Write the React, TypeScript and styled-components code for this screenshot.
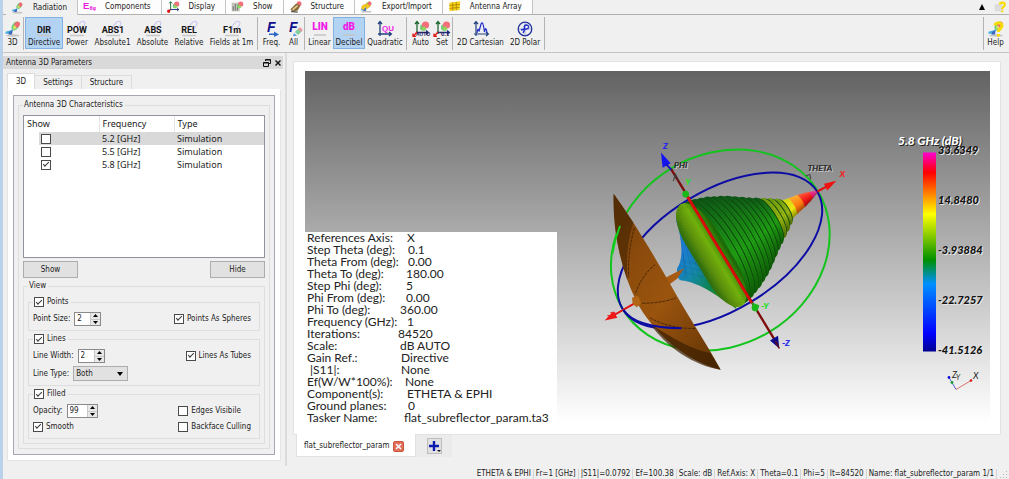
import React from "react";
import styled, { createGlobalStyle } from "styled-components";

const UI_FONT = '"DejaVu Sans Condensed", "Noto Sans", sans-serif';
const LIST_FONT = '"Noto Sans", "Open Sans", sans-serif';
const PLOT_FONT = 'Lato, "Open Sans", sans-serif';

const Global = createGlobalStyle`
  *, *::before, *::after { box-sizing: border-box; }
  body { margin: 0; background: #f0f0f0; color: #1c1c1c; font: 8px/12px ${UI_FONT}; }
  button, input, select { font: inherit; color: inherit; margin: 0; }
`;

const Window = styled.div`
  min-height: 100vh;
  display: flex;
  flex-direction: column;
  border-left: 3px solid #b9d1ea;
  overflow: hidden;
`;

/* ---------- ribbon ---------- */

const TabStrip = styled.nav`
  display: flex;
  height: 15px;
  padding-left: 3px;
  border-bottom: 1px solid #b0b0b0;
`;

const RibbonTab = styled.button<{ $active?: boolean }>`
  display: flex;
  align-items: center;
  gap: 9px;
  height: ${(p) => (p.$active ? 15 : 14)}px;
  padding: 0 10px 0 5px;
  border: 0;
  border-right: 1px solid #c4c4c4;
  background: ${(p) => (p.$active ? "#f0f0f0" : "#fdfdfd")};
  white-space: nowrap;
  svg { width: 13px; height: 14px; }
`;

const StripEnd = styled.div`
  display: flex;
  align-items: center;
  gap: 9px;
  margin-left: auto;
  padding-right: 2px;
`;

const GlyphButton = styled.button`
  display: grid;
  place-items: center;
  padding: 0;
  border: 0;
  background: none;
  line-height: 10px;
`;

const Toolbar = styled.div`
  display: flex;
  align-items: center;
  height: 38px;
  padding: 1px 3px 2px 0;
  border-bottom: 1px solid #c4c4c4;
`;

const ToolButton = styled.button<{ $w: number; $on?: boolean }>`
  display: flex;
  flex-direction: column;
  align-items: center;
  justify-content: flex-end;
  gap: 1px;
  flex: none;
  width: ${(p) => p.$w}px;
  height: 32px;
  padding: 0;
  border: 1px solid ${(p) => (p.$on ? "#84b2e0" : "transparent")};
  background: ${(p) => (p.$on ? "#b3d3f3" : "none")};
  line-height: 10px;
  white-space: nowrap;
  svg { width: 18px; height: 16px; overflow: visible; }
`;

const ToolDivider = styled.span`
  flex: none;
  width: 1px;
  height: 33px;
  margin: 0 1px;
  background: #b4b4b4;
`;

const Spring = styled.span`
  flex: 1;
`;

/* ---------- work area ---------- */

const Work = styled.div`
  flex: 1;
  display: flex;
`;

const Dock = styled.aside`
  flex: none;
  width: 284px;
  padding: 3px 2px 0 0;
  border-right: 2px solid #dcdcdc;
`;

const DockTitle = styled.header`
  display: flex;
  align-items: center;
  height: 13px;
  padding: 0 1px 0 3px;
  background: #d9d9d9;
  gap: 3px;
  h1 { flex: 1; margin: 0; font: inherit; }
  svg { width: 8px; height: 8px; }
`;

const DockTabs = styled.div`
  display: flex;
  align-items: flex-end;
  margin: 4px 0 0 4px;
`;

const DockTab = styled.button<{ $active?: boolean }>`
  height: ${(p) => (p.$active ? 16 : 14)}px;
  padding: 0 8px;
  border: 1px solid #dcdcdc;
  border-bottom: 0;
  border-left-width: ${(p) => (p.$active ? 1 : 0)}px;
  background: ${(p) => (p.$active ? "#fff" : "#f0f0f0")};
`;

const Pane = styled.div`
  margin: 0 2px 0 4px;
  padding: 5px;
  border: 1px solid #e4e4e4;
  border-top-color: #fff;
  background: #fff;
`;

const PaneFrame = styled.div`
  padding: 3px 4px 5px;
  border: 1px solid #a5a8b0;
  background: #f0f0f0;
`;

const Group = styled.fieldset`
  min-width: 0;
  margin: 0;
  padding: 4px;
  border: 1px solid #dedede;
  legend {
    display: flex;
    align-items: center;
    height: 12px;
    padding: 0 2px 0 1px;
    line-height: 12px;
  }
`;

const SubGroup = styled(Group)`
  margin-bottom: 2px;
  padding: 3px 8px 4px 4px;
  &:last-child { margin-bottom: 0; }
`;

const ListFrame = styled.div`
  height: 143px;
  border: 1px solid #8e939c;
  background: #fff;
`;

const List = styled.table`
  width: 100%;
  border-collapse: collapse;
  table-layout: fixed;
  font: 9px/12px ${LIST_FONT};
  th {
    height: 16px;
    padding: 0 3px;
    border-right: 1px solid #e4e4e4;
    font-weight: 400;
    text-align: left;
  }
  th:last-child { border-right: 0; }
  td { height: 13px; padding: 0 3px; }
  td:first-child { padding: 0 0 0 15px; }
`;

const RowMark = styled.span<{ $selected: boolean }>`
  display: flex;
  align-items: center;
  height: 13px;
  padding-left: 2px;
  background: ${(p) => (p.$selected ? "#d9d9d9" : "none")};
`;

const ListRow = styled.tr<{ $selected: boolean }>`
  td:not(:first-child) { background: ${(p) => (p.$selected ? "#d9d9d9" : "none")}; }
`;

const ButtonRow = styled.div`
  display: flex;
  justify-content: space-between;
  margin: 3px 0 2px;
`;

const PushButton = styled.button`
  width: 55px;
  height: 17px;
  padding: 0;
  border: 1px solid #adadad;
  background: #e1e1e1;
  line-height: 12px;
`;

const Tick = styled.input.attrs({ type: "checkbox" })`
  appearance: none;
  flex: none;
  display: grid;
  place-items: center;
  width: 10px;
  height: 10px;
  border: 1px solid #4a4a4a;
  background: #fff;
  &:checked::after {
    content: "";
    width: 6px;
    height: 3px;
    margin-bottom: 2px;
    border: solid #333;
    border-width: 0 0 1px 1px;
    transform: rotate(-45deg);
  }
`;

const TickLabel = styled.label`
  display: inline-flex;
  align-items: center;
  gap: 3px;
  white-space: nowrap;
`;

const FieldRow = styled.div`
  display: flex;
  align-items: center;
  justify-content: space-between;
  height: 15px;
  & + & { margin-top: 3px; }
`;

const FilledGrid = styled.div`
  display: grid;
  grid-template-columns: 1fr auto;
  grid-auto-rows: 15px;
  row-gap: 1px;
  align-items: center;
`;

const Field = styled.div`
  display: flex;
  align-items: center;
  gap: 4px;
`;

const SpinFrame = styled.div<{ $w: number }>`
  display: flex;
  width: ${(p) => p.$w}px;
  height: 14px;
  border: 1px solid #8a8a8a;
  background: #fff;
  input {
    flex: 1;
    min-width: 0;
    padding: 0 0 0 2px;
    border: 0;
    background: none;
    appearance: textfield;
  }
  input::-webkit-inner-spin-button { appearance: none; }
`;

const SpinButtons = styled.div`
  display: grid;
  grid-template-rows: 1fr 1fr;
  width: 10px;
  background: #e8e8e8;
  border-left: 1px solid #c8c8c8;
  button { display: grid; place-items: center; padding: 0; border: 0; background: none; min-height: 0; }
  button + button { border-top: 1px solid #c8c8c8; }
  svg { width: 5px; height: 3px; }
`;

const DropDown = styled.div`
  display: flex;
  align-items: center;
  width: 55px;
  height: 15px;
  border: 1px solid #adadad;
  background: #e1e1e1;
  select {
    flex: 1;
    height: 13px;
    padding: 0 0 0 2px;
    border: 0;
    background: none;
    appearance: none;
    line-height: 12px;
  }
  svg { width: 6px; height: 4px; margin: 0 4px 0 -12px; pointer-events: none; }
`;

/* ---------- result view ---------- */

const Main = styled.main`
  flex: 1;
  min-width: 0;
  display: flex;
  flex-direction: column;
  padding: 8px 8px 9px 6px;
`;

const Sheet = styled.section`
  flex: 1;
  display: flex;
  padding: 9px 10px 12px 11px;
  border: 1px solid #e2e2e2;
  background: #fff;
`;

const Viewport = styled.div`
  position: relative;
  flex: 1;
  min-height: 350px;
  background: linear-gradient(#636363, #ffffff);
`;

const Scene = styled.svg`
  position: absolute;
  inset: 0;
  width: 100%;
  height: 100%;
`;

const InfoBox = styled.dl`
  position: absolute;
  left: 0;
  bottom: -2px;
  width: 252px;
  margin: 0;
  padding: 0 0 0 2px;
  background: #fff;
  color: #222;
  font: 12px/12px ${PLOT_FONT};
`;

const InfoRow = styled.div<{ $col: number }>`
  display: grid;
  grid-template-columns: ${(p) => p.$col}px 1fr;
  height: 12px;
  white-space: pre;
  dt, dd { margin: 0; }
`;

const SheetTabs = styled.div`
  display: flex;
  height: 22px;
  padding-left: 3px;
`;

const SheetTab = styled.div`
  display: flex;
  align-items: center;
  gap: 3px;
  width: 120px;
  padding: 2px 0 0 7px;
  margin-top: -1px;
  background: #fff;
  border: 1px solid #e2e2e2;
  border-top: 0;
`;

const CloseBox = styled.button`
  display: grid;
  place-items: center;
  width: 11px;
  height: 11px;
  padding: 0;
  border: 1px solid #c9553c;
  border-radius: 2px;
  background: #e0705a;
  svg { width: 7px; height: 7px; }
`;

const AddTab = styled.div`
  display: grid;
  place-items: center;
  width: 36px;
  background: #ebebeb;
  button {
    display: grid;
    place-items: center;
    width: 15px;
    height: 16px;
    padding: 0;
    border: 1px solid #bdbdbd;
    background: #e1e1e1;
  }
  svg { width: 13px; height: 13px; }
`;

const StatusBar = styled.footer`
  display: flex;
  align-items: flex-end;
  justify-content: flex-end;
  height: 13px;
  span { padding: 0 2px; border-right: 1px solid #d4d4d4; white-space: nowrap; line-height: 10px; }
  svg { width: 8px; height: 8px; margin: 0 1px 0 3px; }
`;

/* ---------- icons ---------- */

const Lobe = () => (
  <g>
    <ellipse cx="9" cy="14.5" rx="7" ry="1.2" fill="#c4c4c4" />
    <ellipse cx="11.5" cy="5" rx="3.2" ry="4.8" transform="rotate(38 11.5 5)" fill="#6ad07a" />
    <ellipse cx="13" cy="3.6" rx="2.6" ry="3.2" transform="rotate(38 13 3.6)" fill="#f46a72" />
    <ellipse cx="10.6" cy="6.4" rx="1.6" ry="2" fill="#d2dc62" />
    <path d="M9 8 8 12 5 13 1 12.500 2 10.500 6 9.500Z" fill="#4aaede" />
    <path d="M8.500 9 8 13.500 4.500 13.500 5 11Z" fill="#3a68c0" />
  </g>
);

const IconFrame = ({ children }: { children: React.ReactNode }) => (
  <svg viewBox="0 0 18 16" aria-hidden="true">{children}</svg>
);

const WordIcon = ({ word }: { word: string }) => (
  <IconFrame>
    <ellipse cx="13" cy="4.5" rx="2.6" ry="5" transform="rotate(40 13 4.5)" fill="none" stroke="#c3c3f4" strokeWidth="1" />
    <path d="M2 14.5H16" stroke="#c8c8c8" strokeWidth="1.5" />
    <text x="9" y="12" textAnchor="middle" fontFamily="Roboto, sans-serif" fontWeight="700" fontSize="9" fill="#151515">{word}</text>
  </IconFrame>
);

const PinkIcon = ({ word }: { word: string }) => (
  <IconFrame>
    <path d="M3 14H15" stroke="#c4c4c4" strokeWidth="1.5" />
    <text x="9" y="9" textAnchor="middle" fontFamily="Roboto, sans-serif" fontWeight="900" fontSize="10" fill="#f01ce8">{word}</text>
  </IconFrame>
);

const Axes = () => (
  <g fill="none" strokeWidth="1.3">
    <path d="M5 13V1M3 3l2-2.4L7 3" stroke="#1c6a30" />
    <path d="M4 11.500h12m-2-2 2.400 2-2.400 2" stroke="#20307c" />
    <path d="M5 11 1.500 15M1 12.500v2.800h3" stroke="#e01818" />
  </g>
);

const Balloon = () => (
  <g>
    <ellipse cx="11" cy="6.500" rx="3" ry="3.200" fill="#6ccc78" />
    <circle cx="13.500" cy="4" r="3.600" fill="#f4707a" />
    <path d="M9 8.500 12 5l2.500 3L12 10Z" fill="#8fd860" />
  </g>
);

const Question = () => (
  <path d="M8 4.5C8 1.6 15 .6 15 4.6 15 8 11.4 7.6 11.4 11M11.4 13v2.4" fill="none" stroke="#f8dc00" strokeWidth="3" />
);

const BOLD = '"Liberation Sans", sans-serif';

const icons: Record<string, React.ReactNode> = {
  lobe: <IconFrame><Lobe /></IconFrame>,
  field: (
    <IconFrame>
      <text x="0" y="11" fontFamily={BOLD} fontWeight="700" fontSize="13" fill="#e81ce0">E</text>
      <text x="9" y="12" fontFamily={BOLD} fontWeight="700" fontSize="8" fill="#e81ce0">θφ</text>
    </IconFrame>
  ),
  display: <IconFrame><Axes /><Balloon /><circle cx="2.500" cy="13.500" r="2" fill="#e01818" /></IconFrame>,
  show: <IconFrame><rect x="1" y="2" width="11" height="12" fill="#c4c4ba" /><path d="M3 13V7M6 13V4M9 13V8" stroke="#777" strokeWidth="1.5" /><Balloon /></IconFrame>,
  structure: <IconFrame><circle cx="14" cy="3.500" r="3.400" fill="#f06a7a" /><path d="M2 11 10 3l6 3-4 7-7 2Z" fill="#8b6a3a" /><path d="M5 12 12 6" stroke="#e8d49c" strokeWidth="2" /><path d="M3 14.500 12 15" stroke="#555" strokeWidth="1.600" /></IconFrame>,
  exchange: <IconFrame><Lobe /><path d="M2 10Q3 3 9 5V2l5 5-5 4V8Q6 7 6 12Z" fill="#f6c91c" stroke="#d99a10" strokeWidth=".6" /></IconFrame>,
  array: <IconFrame><path d="M2 2 17 0 16 12 2 13.5Z" fill="#f8d010" /><path d="M2 6 16.5 4.5M2 10 16 8.5M6.500 1.500V13M11.500 1V12.500" stroke="#a07c08" strokeWidth="1" /></IconFrame>,
  freq: <IconFrame><text x="4" y="11" fontFamily={BOLD} fontWeight="700" fontStyle="italic" fontSize="14" fill="#10108c">F</text><path d="M6 12.500h5V10.500l5 3-5 2.500V14H6Z" fill="#2c66c8" /></IconFrame>,
  allFreq: <IconFrame><text x="4" y="11" fontFamily={BOLD} fontWeight="700" fontStyle="italic" fontSize="14" fill="#10108c">F</text><path d="M10 11 14 7l3 3-4 4Z" fill="#7ccf9a" /><path d="M13 8 15 6l3 3-2 2Z" fill="#ee9aa4" /><path d="M9 12l3 3H8Z" fill="#5a9ae0" /></IconFrame>,
  quad: <IconFrame><path d="M4 15V1M2 3l2-2.400L6 3M2 13h13m-2-2 2.400 2-2.400 2" fill="none" stroke="#20407c" strokeWidth="1.300" /><text x="6" y="10" fontFamily={BOLD} fontWeight="700" fontSize="8" fill="#f01ce8">QU</text></IconFrame>,
  auto: <IconFrame><Axes /><Balloon /><text x="4" y="15" fontFamily={BOLD} fontWeight="700" fontSize="5" fill="#281c5c">AUTO</text></IconFrame>,
  set: <IconFrame><Axes /><Balloon /><text x="8" y="15" fontFamily={BOLD} fontWeight="700" fontSize="6" fill="#281c5c">0.1</text></IconFrame>,
  cartesian: <IconFrame><path d="M4 15V1M2 3l2-2.400L6 3M2 13h14m-2-2 2.400 2-2.400 2" fill="none" stroke="#20407c" strokeWidth="1.200" /><path d="M5 12Q6 5 7 10.500L9 3Q10.500 0 11.500 5L12.500 11Q14 4 15 12" fill="none" stroke="#2030c8" strokeWidth="1.200" /></IconFrame>,
  polar: <IconFrame><circle cx="9" cy="8" r="6.800" fill="none" stroke="#24349c" strokeWidth="1.300" /><path d="M3 8h12M9 2v12" stroke="#7888d0" strokeWidth=".7" /><path d="M7 12 9 8Q7 5 10 4 13 4 12.500 6.500 12 8.500 9 8L5 9" fill="none" stroke="#2030c8" strokeWidth="1.400" /></IconFrame>,
  help: <IconFrame><Lobe /><Question /></IconFrame>,
};

/* ---------- data ---------- */

const ribbonTabs = [
  ["Radiation", "lobe"], ["Components", "field"], ["Display", "display"], ["Show", "show"],
  ["Structure", "structure"], ["Export/Import", "exchange"], ["Antenna Array", "array"],
];

type Tool = { label: string; w: number; icon: React.ReactNode; on?: boolean };
const toolGroups: Tool[][] = [
  [{ label: "3D", w: 19, icon: icons.lobe }],
  [
    { label: "Directive", w: 38, icon: <WordIcon word="DIR" />, on: true },
    { label: "Power", w: 28, icon: <WordIcon word="POW" /> },
    { label: "Absolute1", w: 43, icon: <WordIcon word="ABS1" /> },
    { label: "Absolute", w: 37, icon: <WordIcon word="ABS" /> },
    { label: "Relative", w: 36, icon: <WordIcon word="REL" /> },
    { label: "Fields at 1m", w: 49, icon: <WordIcon word="F1m" /> },
  ],
  [{ label: "Freq.", w: 25, icon: icons.freq }, { label: "All", w: 19, icon: icons.allFreq }],
  [
    { label: "Linear", w: 27, icon: <PinkIcon word="LIN" /> },
    { label: "Decibel", w: 32, icon: <PinkIcon word="dB" />, on: true },
    { label: "Quadratic", w: 40, icon: icons.quad },
  ],
  [{ label: "Auto", w: 25, icon: icons.auto }, { label: "Set", w: 18, icon: icons.set }],
  [{ label: "2D Cartesian", w: 53, icon: icons.cartesian }, { label: "2D Polar", w: 36, icon: icons.polar }],
];

const frequencies = [
  { value: "5.2 [GHz]", shown: false }, { value: "5.5 [GHz]", shown: false }, { value: "5.8 [GHz]", shown: true },
];

const info: [string, string, number][] = [
  ["References Axis:", "X", 100], ["Step Theta (deg):", "0.1", 101], ["Theta From (deg):", "0.00", 101],
  ["Theta To (deg):", "180.00", 99], ["Step Phi (deg):", "5", 99], ["Phi From (deg):", "0.00", 99],
  ["Phi To (deg):", "360.00", 93], ["Frequency (GHz):", "1", 100], ["Iterations:", "84520", 91],
  ["Scale:", "dB AUTO", 93], ["Gain Ref.:", "Directive", 94], [" |S11|:", "None", 94],
  ["Ef(W/W*100%):", "None", 98], ["Component(s):", "ETHETA & EPHI", 100], ["Ground planes:", "0", 101],
  ["Tasker Name:", "flat_subreflector_param.ta3", 97],
];

const status = ["ETHETA & EPHI", "Fr=1 [GHz]", "|S11|=0.0792", "Ef=100.38", "Scale: dB", "Ref.Axis: X", "Theta=0.1", "Phi=5", "It=84520", "Name: flat_subreflector_param 1/1"];

const scaleMarks = ["33.6349", "14.8480", "-3.93884", "-22.7257", "-41.5126"];

/* ---------- radiation pattern ---------- */

// Radius of the pattern, by distance along its main axis.
const profile: [number, number][] = [
  [-20, 172], [8, 166], [41, 154], [90, 129], [145, 90], [205, 52], [225, 38], [240, 31], [262, 26], [285, 22], [310, 15], [338, 5],
];

const radiusAt = (s: number) => {
  const i = Math.max(1, profile.findIndex(([p]) => p >= s));
  const [a, ra] = profile[i - 1];
  const [b, rb] = profile[i];
  return ra + ((s - a) / (b - a)) * (rb - ra);
};

const ringFill = (s: number) => {
  if (s > 318) return "url(#ringPink)";
  if (s > 282) return "url(#ringRed)";
  if (s > 252) return "url(#ringOrange)";
  if (s > 222) return "url(#ringYellow)";
  if (s > 175) return "url(#ringOlive)";
  return "url(#ringGreen)";
};

const fineRings = Array.from({ length: 23 }, (_, i) => 336 - i * 5);
const coarseRings = Array.from({ length: 14 }, (_, i) => 222 - i * 18);

const ringGradients: [string, string, string, string][] = [
  ["ringPink", "#ff2a9c", "#e8107c", "#b00040"],
  ["ringRed", "#ff5a3a", "#f01818", "#a00808"],
  ["ringOrange", "#ffb030", "#ff7a10", "#a04a00"],
  ["ringYellow", "#c8d418", "#f0e410", "#8a8a00"],
  ["ringOlive", "#6c9a10", "#9cb814", "#4a6a04"],
  ["ringGreen", "#0e5418", "#20a014", "#0e5a06"],
];

const AxisLabel = ({ x, y, fill, children }: { x: number; y: number; fill: string; children: string }) => (
  <text x={x} y={y} fill={fill} stroke={fill} strokeWidth=".6" textAnchor="middle" fontFamily={PLOT_FONT} fontStyle="italic" fontWeight="700" fontSize="25">{children}</text>
);

const Pattern = () => (
  <g transform="translate(570 120) scale(.33333)">
    <g fill="none" strokeWidth="6">
      <ellipse cx="451" cy="389" rx="342" ry="286" transform="rotate(-31 451 389)" stroke="#12c41c" />
      <ellipse cx="450" cy="390" rx="341" ry="180" transform="rotate(-31 450 390)" stroke="#0c0ca4" />
    </g>

    <path d="M200 545 130 585" stroke="#e01010" strokeWidth="6" />
    <path d="M104 600 130 572 142 592Z" fill="#f01010" />
    <path d="M742 213 770 198" stroke="#e01010" strokeWidth="6" />
    <path d="M799 181 762 190 772 210Z" fill="#f01010" />

    <path d="M318 300C342 370 336 425 322 442 318 462 322 476 334 480 384 484 434 520 500 566L460 400 340 280Z" fill="url(#backCone)" />
    <path d="M332 350 350 470M345 370 372 474M340 400 345 474M352 385 395 480M360 400 412 492M372 420 440 515M326 450 400 470M330 435 390 450M334 420 380 430" stroke="#0a3a6a" strokeOpacity=".4" strokeWidth="2" strokeDasharray="3 3" fill="none" />
    <path d="M286 472 342 443 322 474 298 492Z" fill="#a85a10" />

    <g transform="translate(450 388) rotate(-31)">
      {fineRings.map((s) => (
        <ellipse key={s} cx={s} cy="0" rx={radiusAt(s) * 0.3} ry={radiusAt(s)} fill={ringFill(s)} />
      ))}
      {coarseRings.map((s) => (
        <g key={s}>
          <ellipse cx={s + 6} cy="0" rx={radiusAt(s) * 0.27 + 3} ry={radiusAt(s) - 1} fill="#0c440c" />
          <ellipse cx={s} cy="0" rx={radiusAt(s) * 0.27 + 6} ry={radiusAt(s) + 5} fill={ringFill(s)} />
          <ellipse cx={s - 3} cy="0" rx={radiusAt(s) * 0.27 + 2} ry={radiusAt(s)} fill="none" stroke="#0a3c0a" strokeOpacity=".5" strokeWidth="2" strokeDasharray="2 4" />
        </g>
      ))}
      <rect x="-68" y="-174" width="92" height="350" rx="46" ry="130" fill="#1c6a0c" />
      <rect x="-80" y="-178" width="98" height="356" rx="49" ry="110" fill="url(#torus)" />
      <rect x="-73" y="-168" width="84" height="336" rx="42" ry="104" fill="none" stroke="#2c5c06" strokeOpacity=".3" strokeWidth="12" strokeDasharray="2 6" />
    </g>

    <path d="M131 220C175 280 235 375 300 490 360 598 405 660 452 748 350 722 250 640 198 540 150 440 128 330 131 220Z" fill="url(#dish)" />
    <path d="M131 220 190 306C176 350 168 400 172 480 142 390 128 300 131 220Z" fill="#3c2002" fillOpacity=".55" />
    <path d="M240 610C310 655 370 690 420 697L452 748C370 735 290 680 240 610Z" fill="#3c2002" fillOpacity=".7" />
    <path d="M193 322Q172 400 176 470M255 432Q215 465 196 520M205 548Q270 550 318 532M240 592Q300 625 376 624" fill="none" stroke="#3a1e02" strokeWidth="2.500" strokeDasharray="9 3" />
    <path d="M186 532 204 526 214 548 200 560 188 550Z" fill="#b06414" />
    <path d="M150 316Q134 356 127 400" fill="none" stroke="#12d01c" strokeWidth="6" />
    <path d="M160 568Q195 622 335 623" fill="none" stroke="#0c0ca4" strokeWidth="6" />

    <path d="M303 145 620 668" stroke="#7c0c0c" strokeWidth="7" />
    <path d="M352 228 545 547" stroke="#dc0c0c" strokeWidth="8" />
    <path d="M273 96 302 128 278 142Z" fill="#1414f0" />
    <path d="M288 130 304 148" stroke="#1414c0" strokeWidth="6" />
    <path d="M628 684 600 660 624 646Z" fill="#0c0c90" />
    <path d="M616 662 628 684" stroke="#700808" strokeWidth="4" />
    <circle cx="347" cy="221" r="10" fill="#18b818" />
    <path d="M544 546 568 554 560 576Z" fill="#18b818" />
    <circle cx="555" cy="562" r="10" fill="#18b818" />
    <path d="M310 182 316 160 328 184M316 160V172M708 166 720 162 722 176" stroke="#3c3c3c" strokeWidth="3" fill="none" />

    <AxisLabel x={286} y={85} fill="#2020f0">Z</AxisLabel>
    <AxisLabel x={354} y={195} fill="#18e018">Y</AxisLabel>
    <AxisLabel x={817} y={171} fill="#f02020">X</AxisLabel>
    <AxisLabel x={585} y={566} fill="#18e018">-Y</AxisLabel>
    <AxisLabel x={648} y={676} fill="#2020f0">-Z</AxisLabel>
    <AxisLabel x={124} y={592} fill="#f02020">-X</AxisLabel>
    <AxisLabel x={335} y={146} fill="#c8c8c8">PHI</AxisLabel>
    <AxisLabel x={332} y={143} fill="#2a2a2a">PHI</AxisLabel>
    <AxisLabel x={753} y={155} fill="#c8c8c8">THETA</AxisLabel>
    <AxisLabel x={750} y={152} fill="#2a2a2a">THETA</AxisLabel>
  </g>
);

const ColourScale = () => (
  <g fontFamily={PLOT_FONT} fontStyle="italic" fontWeight="900">
    <rect x="923" y="152" width="13" height="199" fill="url(#spectrum)" />
    <text x="899" y="145" fontSize="12" fill="#222">5.8 GHz (dB)</text>
    <text x="898" y="144" fontSize="12" fill="#fff">5.8 GHz (dB)</text>
    {scaleMarks.map((mark, i) => (
      <g key={mark} fontSize="11">
        <text x="939" y={154 + i * 50} fill="#e8e8e8">{mark}</text>
        <text x="938" y={153 + i * 50} fill="#111">{mark}</text>
      </g>
    ))}
  </g>
);

const Triad = () => (
  <g fill="none" strokeWidth="1">
    <path d="M956 389 971 380" stroke="#e07070" />
    <path d="M956 389 949 377" stroke="#5858d8" />
    <circle cx="971" cy="380" r="1.300" fill="#e01010" />
    <circle cx="952" cy="382" r="1.400" fill="#10a030" />
    <circle cx="949" cy="377" r="1.400" fill="#1010e0" />
    <g fontFamily={PLOT_FONT} fontStyle="italic" fontSize="9" fill="#222">
      <text x="973" y="378">X</text>
      <text x="952" y="377">Z</text>
      <text x="956" y="379" fontSize="7">Y</text>
    </g>
  </g>
);

const RadiationScene = () => (
  <Scene viewBox="305 71 685 350" role="img" aria-label="3D radiation pattern at 5.8 GHz">
    <defs>
      <linearGradient id="spectrum" x2="0" y2="1">
        <stop offset="0" stopColor="#ff00d0" />
        <stop offset=".1" stopColor="#ff0000" />
        <stop offset=".31" stopColor="#ffff00" />
        <stop offset=".54" stopColor="#009000" />
        <stop offset=".66" stopColor="#0090ff" />
        <stop offset=".91" stopColor="#0000ff" />
        <stop offset="1" stopColor="#000090" />
      </linearGradient>
      <linearGradient id="dish" x1="0" y1="0" x2=".8" y2="1">
        <stop offset="0" stopColor="#6c3a08" />
        <stop offset=".3" stopColor="#8a4a0c" />
        <stop offset=".6" stopColor="#9a540e" />
        <stop offset="1" stopColor="#6a3806" />
      </linearGradient>
      <linearGradient id="backCone" gradientUnits="userSpaceOnUse" x1="320" y1="420" x2="460" y2="540">
        <stop offset="0" stopColor="#1c7cd0" />
        <stop offset=".35" stopColor="#1488a8" />
        <stop offset=".7" stopColor="#0c8450" />
        <stop offset="1" stopColor="#2c8c10" />
      </linearGradient>
      <linearGradient id="torus">
        <stop offset="0" stopColor="#2c6c10" />
        <stop offset=".3" stopColor="#5c900c" />
        <stop offset=".6" stopColor="#72b00c" />
        <stop offset=".85" stopColor="#3c8c0c" />
        <stop offset="1" stopColor="#1c6808" />
      </linearGradient>
      {ringGradients.map(([id, top, mid, low]) => (
        <linearGradient key={id} id={id} x2="0" y2="1">
          <stop offset="0" stopColor={top} />
          <stop offset=".6" stopColor={mid} />
          <stop offset="1" stopColor={low} />
        </linearGradient>
      ))}
    </defs>
    <Pattern />
    <ColourScale />
    <Triad />
  </Scene>
);

/* ---------- form parts ---------- */

const Check = ({ label, checked = false }: { label: string; checked?: boolean }) => (
  <TickLabel><Tick defaultChecked={checked} />{label}</TickLabel>
);

const Spin = ({ id, label, value, w }: { id: string; label: string; value: number; w: number }) => (
  <Field>
    <label htmlFor={id}>{label}</label>
    <SpinFrame $w={w}>
      <input id={id} type="number" defaultValue={value} />
      <SpinButtons>
        <button aria-label={`Increase ${label}`}><svg viewBox="0 0 5 3"><path d="M0 3 2.500 0 5 3Z" /></svg></button>
        <button aria-label={`Decrease ${label}`}><svg viewBox="0 0 5 3"><path d="M0 0H5L2.500 3Z" /></svg></button>
      </SpinButtons>
    </SpinFrame>
  </Field>
);

const ParameterDock = () => (
  <Dock>
    <DockTitle>
      <h1>Antenna 3D Parameters</h1>
      <GlyphButton aria-label="Float panel"><svg viewBox="0 0 8 8" fill="none" stroke="#111"><path d="M2.500 2V.5h5v4H6M2.500 1h5" /><path d="M.5 3.500h5v4h-5zM.5 4h5" /></svg></GlyphButton>
      <GlyphButton aria-label="Close panel"><svg viewBox="0 0 8 8"><path d="M1.500 1.500 6.500 6.500M6.500 1.500 1.500 6.500" stroke="#111" strokeWidth="1.400" /></svg></GlyphButton>
    </DockTitle>
    <DockTabs>
      <DockTab $active>3D</DockTab>
      <DockTab>Settings</DockTab>
      <DockTab>Structure</DockTab>
    </DockTabs>
    <Pane>
      <PaneFrame>
        <Group>
          <legend>Antenna 3D Characteristics</legend>
          <ListFrame>
            <List>
              <colgroup><col width="75" /><col width="75" /><col /></colgroup>
              <thead><tr><th>Show</th><th>Frequency</th><th>Type</th></tr></thead>
              <tbody>
                {frequencies.map((f, i) => (
                  <ListRow key={f.value} $selected={i === 0}>
                    <td><RowMark $selected={i === 0}><Tick aria-label={`Show ${f.value}`} defaultChecked={f.shown} /></RowMark></td>
                    <td>{f.value}</td>
                    <td>Simulation</td>
                  </ListRow>
                ))}
              </tbody>
            </List>
          </ListFrame>
          <ButtonRow><PushButton>Show</PushButton><PushButton>Hide</PushButton></ButtonRow>
          <Group>
            <legend>View</legend>
            <SubGroup>
              <legend><Check label="Points" checked /></legend>
              <FieldRow><Spin id="point-size" label="Point Size:" value={2} w={27} /><Check label="Points As Spheres" checked /></FieldRow>
            </SubGroup>
            <SubGroup>
              <legend><Check label="Lines" checked /></legend>
              <FieldRow><Spin id="line-width" label="Line Width:" value={2} w={27} /><Check label="Lines As Tubes" checked /></FieldRow>
              <FieldRow>
                <Field>
                  <label htmlFor="line-type">Line Type:</label>
                  <DropDown>
                    <select id="line-type" defaultValue="Both"><option>Both</option></select>
                    <svg viewBox="0 0 6 4"><path d="M0 0H6L3 4Z" /></svg>
                  </DropDown>
                </Field>
              </FieldRow>
            </SubGroup>
            <SubGroup>
              <legend><Check label="Filled" checked /></legend>
              <FilledGrid>
                <Spin id="opacity" label="Opacity:" value={99} w={31} />
                <Check label="Edges Visibile" />
                <Check label="Smooth" checked />
                <Check label="Backface Culling" />
              </FilledGrid>
            </SubGroup>
          </Group>
        </Group>
      </PaneFrame>
    </Pane>
  </Dock>
);

export default function App() {
  return (
    <>
      <Global />
      <Window>
        <TabStrip>
          {ribbonTabs.map(([label, icon], i) => (
            <RibbonTab key={label} $active={i === 0}>{icons[icon]}{label}</RibbonTab>
          ))}
          <StripEnd>
            <GlyphButton aria-label="Collapse ribbon"><svg width="6" height="6" viewBox="0 0 6 6"><path d="M0 6 3 0 6 6Z" /></svg></GlyphButton>
            <GlyphButton aria-label="About"><svg width="13" height="14" viewBox="0 0 18 16"><rect x="1" y="4" width="11" height="10" fill="#dcdcdc" /><Question /></svg></GlyphButton>
          </StripEnd>
        </TabStrip>
        <Toolbar>
          {toolGroups.map((group, i) => (
            <React.Fragment key={i}>
              {group.map((t) => (
                <ToolButton key={t.label} $w={t.w} $on={t.on}>{t.icon}{t.label}</ToolButton>
              ))}
              <ToolDivider />
            </React.Fragment>
          ))}
          <Spring />
          <ToolDivider />
          <ToolButton $w={21}>{icons.help}Help</ToolButton>
        </Toolbar>
        <Work>
          <ParameterDock />
          <Main>
            <Sheet>
              <Viewport>
                <RadiationScene />
                <InfoBox>
                  {info.map(([name, value, col]) => (
                    <InfoRow key={name} $col={col}><dt>{name}</dt><dd>{value}</dd></InfoRow>
                  ))}
                </InfoBox>
              </Viewport>
            </Sheet>
            <SheetTabs>
              <SheetTab>
                flat_subreflector_param
                <CloseBox aria-label="Close tab"><svg viewBox="0 0 7 7"><path d="M1 1 6 6M6 1 1 6" stroke="#fff" strokeWidth="1.500" /></svg></CloseBox>
              </SheetTab>
              <AddTab><button aria-label="Add tab"><svg viewBox="0 0 13 13"><path d="M6 1V11M1 6H11" stroke="#0c1cb0" strokeWidth="2.400" /><path d="M9 10h4l-2 2Z" fill="#111" /></svg></button></AddTab>
            </SheetTabs>
          </Main>
        </Work>
        <StatusBar>
          {status.map((s) => <span key={s}>{s}</span>)}
          <svg viewBox="0 0 8 8" fill="#b8b8b8"><path d="M6 0h1v1H6zM3 3h1v1H3zM6 3h1v1H6zM0 6h1v1H0zM3 6h1v1H3zM6 6h1v1H6z" /></svg>
        </StatusBar>
      </Window>
    </>
  );
}
